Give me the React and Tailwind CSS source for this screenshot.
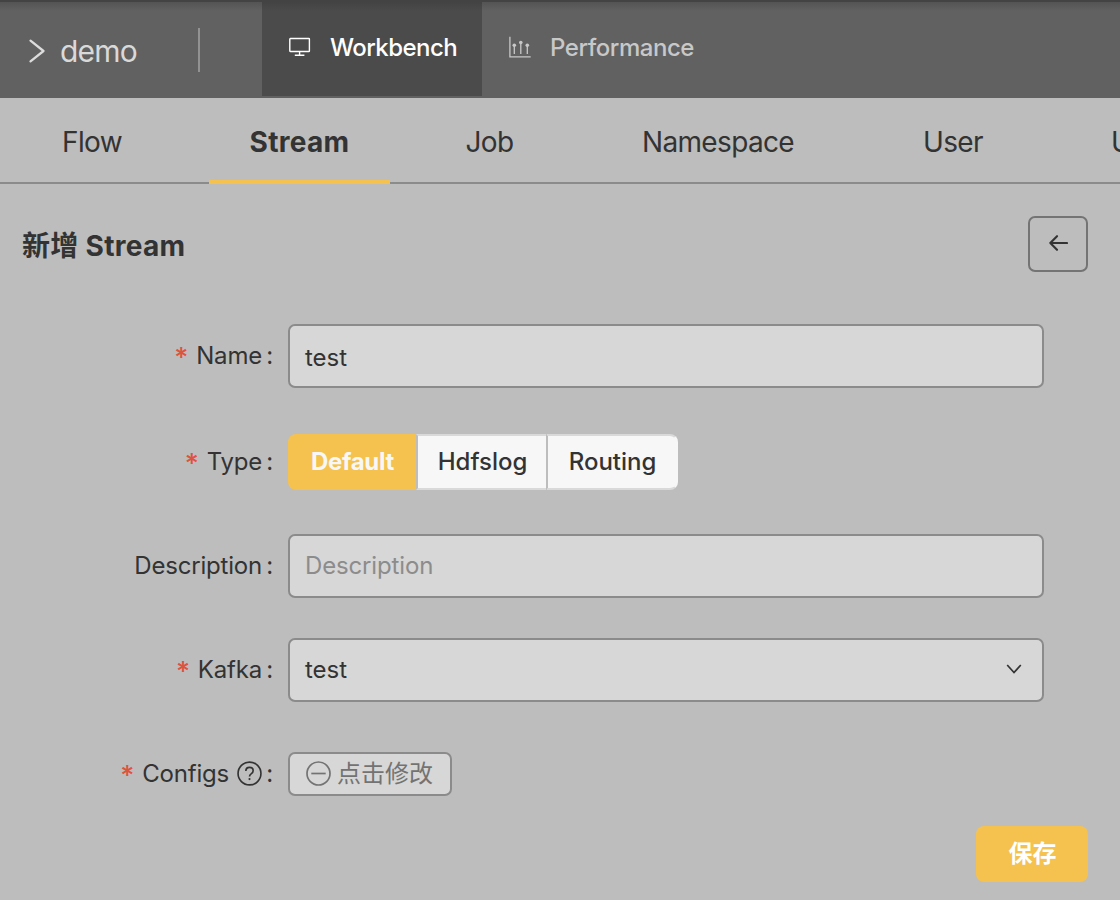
import React from "react";

const tabs = [
  { label: "Flow", box: "w-[60px] ml-[62px]" },
  { label: "Stream", box: "w-[181px] ml-[87px]", active: true },
  { label: "Job", box: "w-[49px] ml-[75px]" },
  { label: "Namespace", box: "w-[154px] ml-[127px]" },
  { label: "User", box: "w-[62px] ml-[127px]" },
  { label: "U", box: "w-[22px] ml-[126px]" },
];

function Label({ children, required }) {
  return (
    <div className="flex w-[274px] shrink-0 items-center justify-end whitespace-nowrap text-[24px] leading-8 tracking-[-0.2px]">
      {required && <span className="mr-[8px] mt-[4px] text-[27px] font-medium text-[#e05140]">*</span>}
      {children}
      <span className="ml-[3px] w-[9px] text-center">:</span>
    </div>
  );
}

function Row({ label, required, className, children }) {
  return (
    <div className={"flex items-center gap-[14px] " + className}>
      <Label required={required}>{label}</Label>
      {children}
    </div>
  );
}

const field =
  "flex h-16 w-[756px] items-center rounded-[7px] border-2 border-[#8b8b8b] bg-[#d7d7d7] pl-[15px] pr-[20px] text-[24px] leading-8";

export default function App() {
  return (
    <div className="h-[900px] w-[1120px] overflow-hidden bg-[#bdbdbd] font-['Inter','Noto_Sans_CJK_SC',sans-serif] font-[440] text-[#333333]">
      <header className="flex h-[98px] border-t-2 border-[#434343] bg-[#616161] bg-[linear-gradient(to_bottom,#545454,#616161_9px)]">
        <div className="flex w-[262px] items-start">
          <svg className="ml-[28px] mt-[36px] h-[26px] w-[18px]" viewBox="0 0 18 26" fill="none" stroke="#dcdcdc" strokeWidth="2.3" strokeLinecap="round" strokeLinejoin="round">
            <path d="M2.5 2.7 15.5 13 2.5 23.3" />
          </svg>
          <span className="ml-[14px] mt-[29px] w-[78px] whitespace-nowrap text-[30px] leading-10 tracking-[-0.8px] text-[#d9d9d9]">demo</span>
          <div className="ml-[60px] mt-[26px] h-11 w-0.5 bg-[#929292]" />
        </div>
        <div className="flex h-[94px] w-[220px] items-start bg-[#4b4b4b] bg-[linear-gradient(to_bottom,#434343,#4b4b4b_9px)] text-white">
          <svg className="ml-[27px] mt-[35px] h-5 w-[22px]" viewBox="0 0 22 20" fill="none" stroke="currentColor" strokeWidth="1.4">
            <rect x="0.8" y="1.5" width="19.6" height="13" rx="0.6" />
            <path d="M10.6 14.5v3.7M5.8 18.2h9.6" />
          </svg>
          <span className="ml-[19px] mt-[30px] whitespace-nowrap text-[24px] font-[550] leading-8 tracking-[-0.55px]">Workbench</span>
        </div>
        <div className="flex items-start text-[#c8c8c8]">
          <svg className="ml-[27px] mt-[34px] h-[22px] w-[23px]" viewBox="0 0 23 22" fill="none" stroke="currentColor" strokeWidth="1.3">
            <path d="M0.9 0.8v20h20.8M5.3 9v9M11.8 6v12M18.3 9v9" />
            <g fill="currentColor" stroke="none">
              <circle cx="5.3" cy="9.2" r="1.8" />
              <circle cx="11.8" cy="6.5" r="1.8" />
              <circle cx="18.3" cy="9.2" r="1.8" />
            </g>
          </svg>
          <span className="ml-[18px] mt-[30px] whitespace-nowrap text-[24px] font-[550] leading-8 tracking-[-0.45px]">Performance</span>
        </div>
      </header>

      <nav className="flex h-[86px] bg-[linear-gradient(#8b8b8b,#8b8b8b)] bg-[length:100%_2px] bg-bottom bg-no-repeat">
        {tabs.map((tab) => (
          <div
            key={tab.label}
            className={
              "flex h-[86px] shrink-0 justify-center whitespace-nowrap pt-[24px] text-[28px] leading-10 " +
              tab.box +
              (tab.active
                ? " border-b-4 border-[#f5c24f] font-bold tracking-[0.3px]"
                : " font-normal tracking-[-0.65px]")
            }
          >
            {tab.label}
          </div>
        ))}
      </nav>

      <main>
        <div className="flex h-[88px] items-end justify-between pl-[22px] pr-8">
          <h1 className="mb-[6px] whitespace-nowrap text-[28px] font-bold leading-10 tracking-[0.3px]">新增 Stream</h1>
          <button className="flex h-14 w-[60px] items-center justify-center rounded-[7px] border-2 border-[#747474]">
            <svg className="mb-[2px] h-[18px] w-5" viewBox="0 0 20 18" fill="none" stroke="#333333" strokeWidth="2.1" strokeLinecap="round" strokeLinejoin="round">
              <path d="M19 9H2.3M9 2.2 2.3 9 9 15.8" />
            </svg>
          </button>
        </div>

        <Row label="Name" required className="mt-[52px] h-16">
          <div className={field + " pt-[3px]"}>test</div>
        </Row>

        <Row label="Type" required className="mt-[46px] h-14">
          <div className="flex h-14 text-[24px] font-medium leading-[52px]">
            <div className="w-[128px] rounded-l-[8px] bg-[#f5c24f] pl-px text-center font-bold leading-[56px] tracking-[-0.35px] text-[#f7f7f7]">Default</div>
            <div className="w-[130px] border-2 border-r-0 border-[#d9d9d9] border-l-[#bdbdbd] bg-[#f7f7f7] pl-px text-center">Hdfslog</div>
            <div className="w-[132px] rounded-r-[8px] border-2 border-[#d9d9d9] border-l-[#bdbdbd] border-r-[#f7f7f7] bg-[#f7f7f7] pl-px text-center">Routing</div>
          </div>
        </Row>

        <Row label="Description" className="mt-[44px] h-16">
          <div className={field + " tracking-[-0.15px] text-[#8c8c8c]"}>Description</div>
        </Row>

        <Row label="Kafka" required className="mt-[40px] h-16">
          <div className={field + " justify-between"}>
            test
            <svg className="mb-[2px] h-[10px] w-4" viewBox="0 0 16 10" fill="none" stroke="#333333" strokeWidth="1.7">
              <path d="M1.2 1 8 8.6 14.8 1" />
            </svg>
          </div>
        </Row>

        <Row
          label={
            <span className="flex items-center gap-2">
              Configs
              <svg className="mb-[2px] h-[25px] w-[25px]" viewBox="0 0 26 26" fill="none" stroke="#333333" strokeWidth="1.7">
                <circle cx="13" cy="13" r="11.9" />
                <path d="M9.2 10.5c0-2.3 1.6-3.8 3.8-3.8s3.8 1.4 3.8 3.4c0 1.7-1 2.6-2.1 3.3-1.1.7-1.7 1.3-1.7 2.7" />
                <circle cx="13" cy="18.8" r="1.1" fill="#333333" stroke="none" />
              </svg>
            </span>
          }
          required
          className="mt-[50px] h-11"
        >
          <button className="flex h-11 w-[164px] items-center gap-[6px] whitespace-nowrap rounded-[7px] border-2 border-[#8b8b8b] bg-[#d7d7d7] pl-4 text-[24px] leading-8 text-[#737373]">
            <svg className="mb-[2px] h-[25px] w-[25px] shrink-0" viewBox="0 0 25 25" fill="none" stroke="currentColor" strokeWidth="1.7">
              <circle cx="12.5" cy="12.5" r="11.5" />
              <path d="M5.3 12.5h14.4" />
            </svg>
            点击修改
          </button>
        </Row>

        <div className="mt-[30px] flex justify-end pr-8">
          <button className="h-14 w-28 rounded-[8px] bg-[#f5c24f] pl-px text-[24px] font-bold leading-[56px] text-white">保存</button>
        </div>
      </main>
    </div>
  );
}
